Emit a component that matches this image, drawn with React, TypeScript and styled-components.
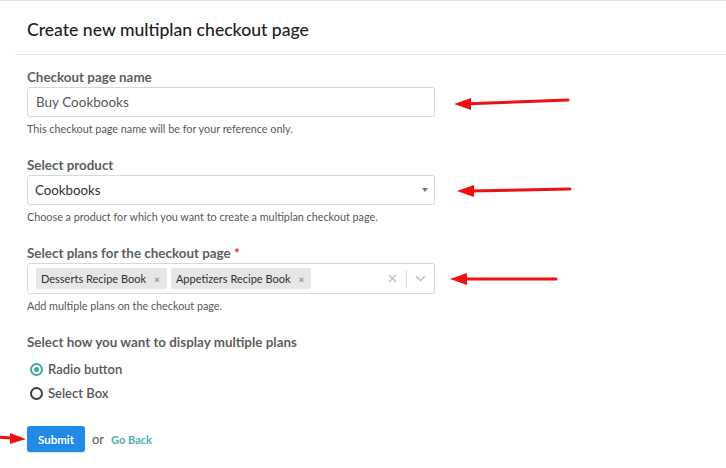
import React from 'react';
import styled, { createGlobalStyle } from 'styled-components';

const GlobalStyle = createGlobalStyle`
  html, body {
    margin: 0;
    padding: 0;
    background: #fff;
  }
  body {
    font-family: Lato, 'Open Sans', sans-serif;
    -webkit-font-smoothing: antialiased;
  }
`;

const Page = styled.div`
  width: 726px;
  height: 468px;
  box-sizing: border-box;
  border-top: 1px solid #dfe3e8;
  padding-left: 15px;
  overflow: hidden;
`;

const Header = styled.div`
  height: 53px;
  display: flex;
  align-items: center;
  padding: 0 12px;
  border-bottom: 1px solid #e3e5e8;
`;

const Title = styled.h1`
  margin: 3px 0 0;
  font-size: 17.6px;
  font-weight: 500;
  color: #1f2124;
`;

const Form = styled.form`
  padding: 14px 12px 0;
  display: flex;
  flex-direction: column;
`;

const Group = styled.div`
  margin-bottom: 21px;
`;

const Label = styled.div`
  font-size: 13.4px;
  line-height: 16px;
  font-weight: 700;
  color: #5c5f62;
  margin-bottom: 2px;
`;

const Required = styled.span`
  color: #d0342c;
`;

const FieldRow = styled.div`
  display: flex;
  align-items: center;
`;

const Control = styled.div<{ tall?: boolean }>`
  width: 408px;
  height: ${({ tall }) => (tall ? '31px' : '30px')};
  box-sizing: border-box;
  border: 1px solid #d6d8da;
  border-radius: 3px;
  display: flex;
  align-items: center;
  background: #fff;
`;

const InputText = styled.span`
  padding-left: 8px;
  font-size: 13.5px;
  color: #55585b;
`;

const SelectText = styled.span`
  padding-left: 7px;
  font-size: 13.3px;
  color: #2e3033;
  flex: 1;
`;

const Caret = styled.span`
  width: 0;
  height: 0;
  border-left: 3px solid transparent;
  border-right: 3px solid transparent;
  border-top: 4px solid #777;
  margin-right: 6px;
`;

const Tags = styled.div`
  flex: 1;
  display: flex;
  gap: 4px;
  padding-left: 8px;
`;

const Tag = styled.span`
  display: inline-flex;
  align-items: center;
  height: 21px;
  padding: 0 7px 0 5px;
  background: #e6e6e6;
  border-radius: 2px;
  font-size: 11px;
  color: #2e3033;
`;

const TagX = styled.span`
  margin-left: 8px;
  font-size: 10px;
  color: #777;
`;

const Indicators = styled.div`
  display: flex;
  align-items: center;
  height: 100%;
  padding-right: 8px;
`;

const Separator = styled.span`
  width: 1px;
  height: 18px;
  background: #d9d9d9;
  margin: 0 8px 0 9px;
`;

const Help = styled.div`
  margin-top: 5px;
  font-size: 10.8px;
  line-height: 14px;
  color: #55585b;
`;

const ArrowBox = styled.svg<{ gap: number }>`
  margin-left: ${({ gap }) => gap}px;
  display: block;
  overflow: visible;
`;

const Radios = styled.div`
  margin-top: 5px;
  display: flex;
  flex-direction: column;
`;

const RadioRow = styled.label`
  height: 24px;
  display: flex;
  align-items: center;
  padding-left: 3px;
  gap: 5px;
  font-size: 13px;
  font-weight: 600;
  color: #55585b;
`;

const RadioDot = styled.span<{ checked?: boolean }>`
  width: 13px;
  height: 13px;
  box-sizing: border-box;
  border-radius: 50%;
  border: 2px solid ${({ checked }) => (checked ? '#3ea99b' : '#3a3c3e')};
  display: flex;
  align-items: center;
  justify-content: center;
  &::after {
    content: '';
    width: 5px;
    height: 5px;
    border-radius: 50%;
    background: ${({ checked }) => (checked ? '#3ea99b' : 'transparent')};
  }
`;

const Actions = styled.div`
  margin-top: 21px;
  display: flex;
  align-items: center;
  gap: 7px;
  position: relative;
`;

const SubmitButton = styled.button`
  width: 58px;
  height: 26px;
  border: none;
  border-radius: 3px;
  background: #2189e6;
  color: #fff;
  font-family: inherit;
  font-size: 11.5px;
  font-weight: 700;
  box-shadow: 0 1px 2px rgba(0, 0, 0, 0.15);
  padding: 0;
`;

const Or = styled.span`
  font-size: 13px;
  color: #55585b;
`;

const BackLink = styled.a`
  font-size: 11px;
  font-weight: 700;
  color: #4bb1ae;
  text-decoration: none;
`;

const LeftArrow = styled.svg`
  position: absolute;
  left: -27px;
  top: 5px;
  overflow: visible;
`;

const Arrow = ({ gap, length, tilt = 0 }: { gap: number; length: number; tilt?: number }) => (
  <ArrowBox gap={gap} width={length} height={14} viewBox={`0 0 ${length} 14`}>
    <line x1={14} y1={7 + tilt * 0.9} x2={length} y2={7 - tilt} stroke="#ee1111" strokeWidth={3} strokeLinecap="round" />
    <polygon points={`0,${7 + tilt} 17,${1 + tilt} 17,${13 + tilt}`} fill="#ee1111" />
  </ArrowBox>
);

const ChevronDown = () => (
  <svg width="11" height="7" viewBox="0 0 11 7">
    <path d="M1 1 L5.5 5.5 L10 1" fill="none" stroke="#bdbdbd" strokeWidth="1.4" />
  </svg>
);

const ClearX = () => (
  <svg width="9" height="9" viewBox="0 0 9 9">
    <path d="M1 1 L8 8 M8 1 L1 8" stroke="#c4c4c4" strokeWidth="1.6" />
  </svg>
);

export default function App() {
  return (
    <>
      <GlobalStyle />
      <Page>
        <Header>
          <Title>Create new multiplan checkout page</Title>
        </Header>
        <Form onSubmit={e => e.preventDefault()}>
          <Group>
            <Label>Checkout page name</Label>
            <FieldRow>
              <Control>
                <InputText>Buy Cookbooks</InputText>
              </Control>
              <Arrow gap={19} length={114} tilt={2} />
            </FieldRow>
            <Help>This checkout page name will be for your reference only.</Help>
          </Group>

          <Group>
            <Label>Select product</Label>
            <FieldRow>
              <Control>
                <SelectText>Cookbooks</SelectText>
                <Caret />
              </Control>
              <Arrow gap={22} length={113} tilt={1} />
            </FieldRow>
            <Help>Choose a product for which you want to create a multiplan checkout page.</Help>
          </Group>

          <Group>
            <Label>
              Select plans for the checkout page <Required>*</Required>
            </Label>
            <FieldRow>
              <Control tall>
                <Tags>
                  <Tag>
                    Desserts Recipe Book<TagX>×</TagX>
                  </Tag>
                  <Tag>
                    Appetizers Recipe Book<TagX>×</TagX>
                  </Tag>
                </Tags>
                <Indicators>
                  <ClearX />
                  <Separator />
                  <ChevronDown />
                </Indicators>
              </Control>
              <Arrow gap={15} length={106} />
            </FieldRow>
            <Help>Add multiple plans on the checkout page.</Help>
          </Group>

          <Label>Select how you want to display multiple plans</Label>
          <Radios>
            <RadioRow>
              <RadioDot checked />
              Radio button
            </RadioRow>
            <RadioRow>
              <RadioDot />
              Select Box
            </RadioRow>
          </Radios>

          <Actions>
            <LeftArrow width={26} height={14} viewBox="0 0 26 14">
              <line x1={-2} y1={6} x2={12} y2={7} stroke="#ee1111" strokeWidth={3} strokeLinecap="round" />
              <polygon points="26,8 10,2 10,13" fill="#ee1111" />
            </LeftArrow>
            <SubmitButton type="submit">Submit</SubmitButton>
            <Or>or</Or>
            <BackLink href="#">Go Back</BackLink>
          </Actions>
        </Form>
      </Page>
    </>
  );
}
